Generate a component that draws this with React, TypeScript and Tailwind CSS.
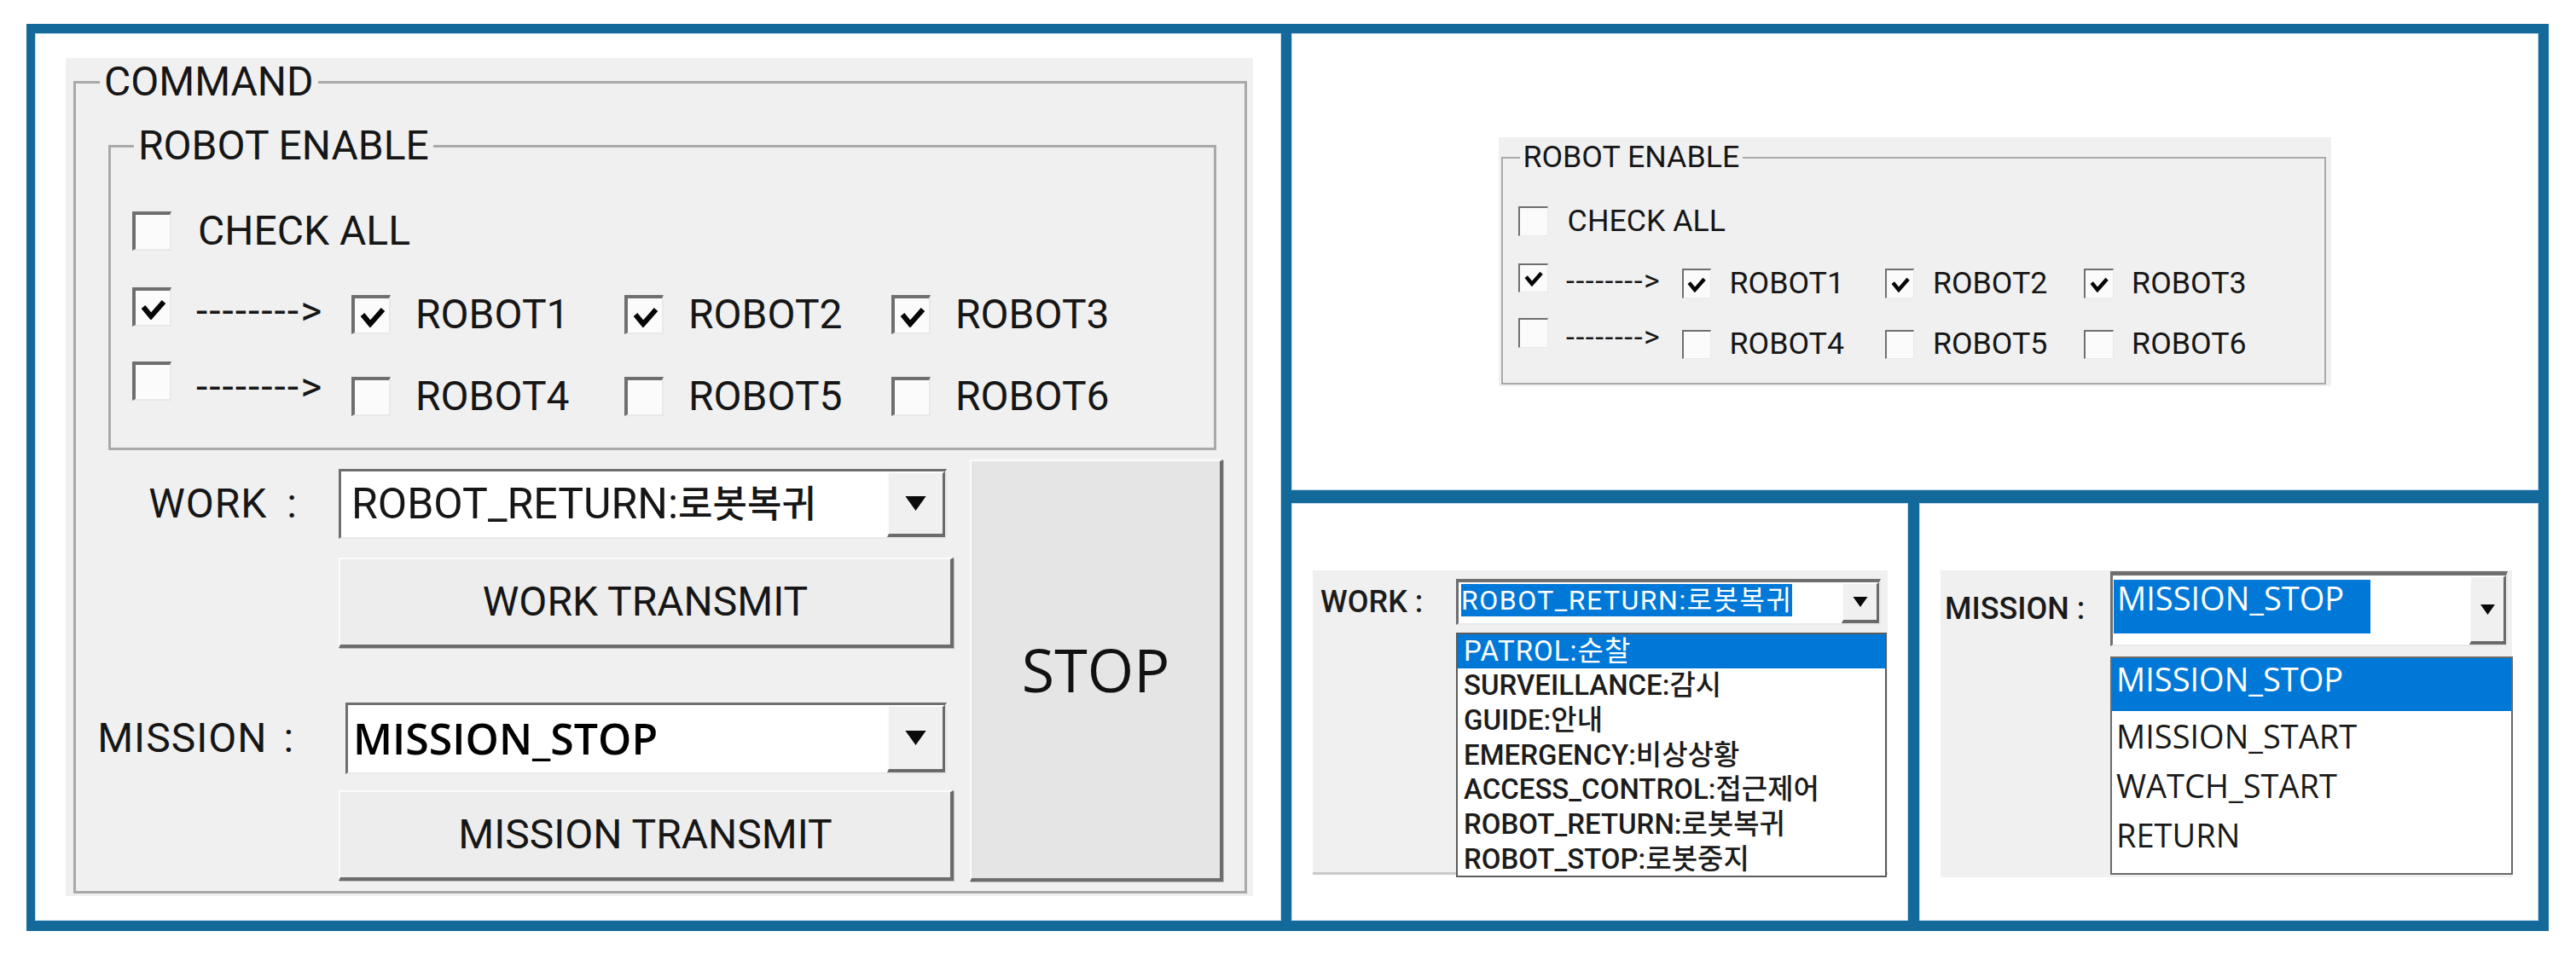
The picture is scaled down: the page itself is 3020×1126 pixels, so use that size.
import type { ReactNode } from "react";

const sans = "font-['Roboto','Noto_Sans_CJK_KR',sans-serif]";
const segoe = "font-['Open_Sans','Noto_Sans_CJK_KR',sans-serif]";

// classic sunken edge: dark top/left, light bottom/right
const sunken =
  "border-t-[#6f6f6f] border-l-[#6f6f6f] border-r-[#e9e9e9] border-b-[#e9e9e9]";

const panel = "bg-white shadow-[inset_0_0_0_1px_#c4dbe9]";

interface BoxProps {
  className?: string;
  children?: ReactNode;
}

const CheckBox = ({
  checked = false,
  className = "",
}: {
  checked?: boolean;
  className?: string;
}) => (
  <span
    className={`relative block shrink-0 w-[46px] h-[46px] bg-[#fbfbfb] border-t-[4px] border-l-[4px] border-r-[2px] border-b-[2px] ${sunken} ${className}`}
  >
    {checked && (
      <svg
        viewBox="0 0 30 24"
        className="absolute left-[6px] top-[10px] w-[30px] h-[24px]"
      >
        <path d="M3 9 L12 20 L27 3" fill="none" stroke="#050505" strokeWidth="6" />
      </svg>
    )}
  </span>
);

const DropButton = ({
  className = "",
  arrow = "w-[25px] h-[17px]",
}: {
  className?: string;
  arrow?: string;
}) => (
  <span
    className={`flex items-center justify-center shrink-0 bg-[#f0f0f0] border-t-[2px] border-l-[2px] border-t-[#fdfdfd] border-l-[#fdfdfd] border-r-[3px] border-b-[4px] border-r-[#6a6a6a] border-b-[#6a6a6a] ${className}`}
  >
    <svg viewBox="0 0 10 7" className={arrow}>
      <path d="M0 0 H10 L5 7 Z" fill="#0a0a0a" />
    </svg>
  </span>
);

const Field = ({ className = "", children }: BoxProps) => (
  <div
    className={`flex bg-white border-t-[3px] border-l-[3px] border-r-[2px] border-b-[2px] ${sunken} ${className}`}
  >
    {children}
  </div>
);

const RaisedButton = ({ className = "", children }: BoxProps) => (
  <div
    className={`flex items-center justify-center border-t-[2px] border-l-[2px] border-t-[#fbfbfb] border-l-[#fbfbfb] border-r-[4px] border-b-[4px] border-r-[#6c6c6c] border-b-[#6c6c6c] shadow-[1px_1px_0_#bdbdbd] ${className}`}
  >
    {children}
  </div>
);

const Robot = ({
  name,
  checked,
  className = "",
}: {
  name: string;
  checked: boolean;
  className?: string;
}) => (
  <div className={`flex items-center ${className}`}>
    <CheckBox checked={checked} />
    <span className="ml-[29px]">{name}</span>
  </div>
);

const RobotRow = ({
  on,
  names,
  lift,
  arrowLift,
  className = "",
}: {
  on: boolean;
  names: string[];
  lift: string;
  arrowLift: string;
  className?: string;
}) => (
  <div className={`flex items-center h-[50px] ${className}`}>
    <CheckBox checked={on} className={lift} />
    <span className={`ml-[29px] w-[150px] tracking-[2px] ${arrowLift}`}>
      {"-------->"}
    </span>
    <Robot name={names[0]} checked={on} className="ml-[32px] w-[320px]" />
    <Robot name={names[1]} checked={on} className="w-[313px]" />
    <Robot name={names[2]} checked={on} />
  </div>
);

const RobotEnable = () => (
  <fieldset className="w-[1299px] border-[3px] border-[#a9a9a9] pl-[25px] pb-[35px]">
    <legend className="ml-[2px] px-[5px] leading-none">ROBOT ENABLE</legend>
    <div className="mt-[51px] flex items-center h-[50px]">
      <CheckBox />
      <span className="ml-[31px]">CHECK ALL</span>
    </div>
    <RobotRow
      on
      names={["ROBOT1", "ROBOT2", "ROBOT3"]}
      lift="mb-[18px]"
      arrowLift="mb-[8px]"
      className="mt-[48px]"
    />
    <RobotRow
      on={false}
      names={["ROBOT4", "ROBOT5", "ROBOT6"]}
      lift="mb-[36px]"
      arrowLift="mb-[22px]"
      className="mt-[46px]"
    />
  </fieldset>
);

const CommandPanel = () => (
  <div className={`w-[1461px] pt-[29px] pl-[36px] ${panel}`}>
    <div className={`w-[1392px] h-[983px] bg-[#f0f0f0] pt-[4px] pl-[9px] text-[48px] text-[#161616] ${sans}`}>
      <fieldset className="w-[1376px] border-[3px] border-[#a9a9a9] pb-[11px]">
        <legend className="ml-[28px] px-[5px] leading-none">COMMAND</legend>
        <div className="mt-[27px] pl-[38px]">
          <RobotEnable />
        </div>
        <div className="mt-[11px] flex">
          <div className="w-[1029px]">
            <div className="mt-[11px] flex items-center">
              <span className="w-[308px] pr-[48px] text-right tracking-[1px] [word-spacing:10px]">
                WORK :
              </span>
              <Field className="w-[713px] h-[82px]">
                <span className="flex-1 flex items-center pl-[12px] text-[50px]">
                  ROBOT_RETURN:
                  <span className="text-[44px] font-medium">로봇복귀</span>
                </span>
                <DropButton className="w-[68px]" />
              </Field>
            </div>
            <RaisedButton className="mt-[22px] ml-[308px] w-[721px] h-[106px] bg-[#ededed]">
              WORK TRANSMIT
            </RaisedButton>
            <div className="mt-[64px] flex items-center">
              <span className="w-[308px] pr-[52px] text-right tracking-[1px] [word-spacing:6px]">
                MISSION :
              </span>
              <Field className="ml-[8px] w-[705px] h-[84px]">
                <span className={`flex-1 flex items-center pl-[6px] text-[50px] font-semibold text-black ${segoe}`}>
                  MISSION_STOP
                </span>
                <DropButton className="w-[68px]" />
              </Field>
            </div>
            <RaisedButton className="mt-[19px] ml-[308px] w-[721px] h-[106px] bg-[#ededed]">
              MISSION TRANSMIT
            </RaisedButton>
          </div>
          <RaisedButton className={`ml-[19px] w-[297px] h-[495px] bg-[#e5e5e5] text-[70px] text-[#111] ${segoe}`}>
            STOP
          </RaisedButton>
        </div>
      </fieldset>
    </div>
  </div>
);

const workItems = [
  "SURVEILLANCE:감시",
  "GUIDE:안내",
  "EMERGENCY:비상상황",
  "ACCESS_CONTROL:접근제어",
  "ROBOT_RETURN:로봇복귀",
  "ROBOT_STOP:로봇중지",
];

const missionItems = ["MISSION_START", "WATCH_START", "RETURN"];

const WorkDropdown = () => (
  <div className={`w-[723px] pt-[79px] pl-[25px] ${panel}`}>
    <div className={`relative w-[674px] h-[357px] bg-[#f0f0f0] border-b-[3px] border-[#c9c9c9] text-[#1c1c1c] ${sans}`}>
      <div className="flex pt-[10px]">
        <span className="w-[168px] pl-[9px] h-[54px] flex items-center text-[36px] font-medium">
          WORK :
        </span>
        <Field className="w-[498px] h-[54px] border-t-[4px]">
          <span className="flex-1">
            <span className="inline-block ml-[3px] mt-[2px] h-[38px] leading-[38px] bg-[#0078d7] text-white text-[32px] tracking-[1.5px]">
              ROBOT_RETURN:로봇복귀
            </span>
          </span>
          <DropButton className="w-[44px]" arrow="w-[18px] h-[12px]" />
        </Field>
      </div>
      <div className="absolute left-[168px] top-[73px] w-[505px] h-[287px] border-2 border-[#5c5c5c] bg-white text-[33px]">
        <div className="h-[40px] leading-[40px] pl-[7px] bg-[#0078d7] text-white tracking-[1px]">
          PATROL:순찰
        </div>
        {workItems.map((item) => (
          <div key={item} className="h-[40.8px] leading-[40px] pl-[7px] font-medium">
            {item}
          </div>
        ))}
      </div>
    </div>
  </div>
);

const MissionDropdown = () => (
  <div className={`flex-1 pt-[79px] pl-[25px] ${panel}`}>
    <div className={`relative w-[670px] h-[360px] bg-[#f0f0f0] text-[#1a1a1a] ${segoe}`}>
      <div className="flex items-center pt-[1px]">
        <span className={`w-[199px] pl-[5px] text-[36px] font-medium ${sans}`}>MISSION :</span>
        <Field className="w-[466px] h-[88px] border-t-[5px]">
          <span className="flex-1">
            <span className="block ml-[1px] mt-[5px] w-[301px] h-[63px] pl-[4px] leading-[42px] bg-[#0078d7] text-white text-[38px]">
              MISSION_STOP
            </span>
          </span>
          <DropButton className="w-[43px]" arrow="w-[17px] h-[12px]" />
        </Field>
      </div>
      <div className="absolute left-[199px] top-[101px] w-[472px] h-[256px] border-2 border-[#6a6a6a] bg-white text-[38px]">
        <div className="h-[62px] pt-[3px] pl-[5px] leading-[42px] bg-[#0078d7] text-white">
          MISSION_STOP
        </div>
        {missionItems.map((item) => (
          <div key={item} className="h-[58px] leading-[58px] pl-[5px]">
            {item}
          </div>
        ))}
      </div>
    </div>
  </div>
);

const App = () => {
  return (
    <div className="w-[3020px] h-[1126px] bg-white pt-[28px] pl-[31px]">
      <div className="w-[2957px] h-[1064px] bg-[#14699b] pt-[11px] pl-[10px] pr-[12px] pb-[12px] flex gap-[12px]">
        <CommandPanel />
        <div className="w-[1462px] flex flex-col gap-[15px]">
          <div className={`h-[536px] flex items-center justify-center ${panel}`}>
            <div className={`[zoom:0.745] bg-[#f0f0f0] pt-[8px] pl-[4px] pr-[8px] pb-[3px] text-[48px] text-[#161616] ${sans}`}>
              <RobotEnable />
            </div>
          </div>
          <div className="flex-1 flex gap-[13px]">
            <WorkDropdown />
            <MissionDropdown />
          </div>
        </div>
      </div>
    </div>
  );
};

export default App;
